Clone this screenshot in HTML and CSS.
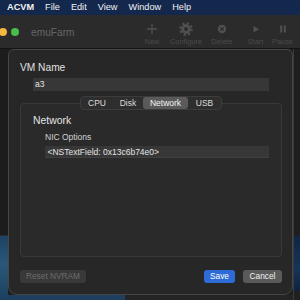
FILE: index.html
```html
<!DOCTYPE html>
<html>
<head>
<meta charset="utf-8">
<link rel="stylesheet" href="styles.css">
</head>
<body>
<div class="screen">
  <div class="menubar">
    <span class="menu app">ACVM</span>
    <span class="menu">File</span>
    <span class="menu">Edit</span>
    <span class="menu">View</span>
    <span class="menu">Window</span>
    <span class="menu">Help</span>
  </div>
  <div class="titlebar">
    <div class="lights"><span class="light yellow"></span><span class="light green"></span></div>
    <div class="title">emuFarm</div>
    <div class="toolbar">
      <div class="tool t-new">
        <svg class="icon" width="14" height="14" viewBox="0 0 14 14"><path d="M7 2V12M2 7H12" stroke="#505050" stroke-width="1.3" fill="none"/></svg>
        <span class="tool-label">New</span>
      </div>
      <div class="tool t-conf">
        <svg class="icon" width="14" height="14" viewBox="0 0 14 14"><circle cx="7" cy="7" r="5.6" fill="none" stroke="#505050" stroke-width="2.4" stroke-dasharray="2.2 2.2"/><circle cx="7" cy="7" r="4.7" fill="#505050"/><circle cx="7" cy="7" r="1.9" fill="#2b2b2b"/></svg>
        <span class="tool-label">Configure</span>
      </div>
      <div class="tool t-del">
        <svg class="icon" width="14" height="14" viewBox="0 0 14 14"><circle cx="7" cy="7" r="4.2" fill="#505050"/><path d="M5.3 5.3L8.7 8.7M8.7 5.3L5.3 8.7" stroke="#2b2b2b" stroke-width="1.1"/></svg>
        <span class="tool-label">Delete</span>
      </div>
      <div class="tool t-start">
        <svg class="icon" width="14" height="14" viewBox="0 0 14 14"><path d="M4.5 4L10 7.2L4.5 10.4Z" fill="#505050"/></svg>
        <span class="tool-label">Start</span>
      </div>
      <div class="tool t-pause">
        <svg class="icon" width="14" height="14" viewBox="0 0 14 14"><rect x="4.2" y="3.5" width="2" height="7" fill="#505050"/><rect x="7.8" y="3.5" width="2" height="7" fill="#505050"/></svg>
        <span class="tool-label">Pause</span>
      </div>
    </div>
  </div>
  <div class="stage">
    <div class="gutter gutter-left"></div>
    <div class="center">
      <div class="sheet">
        <div class="vm-label">VM Name</div>
        <div class="field field-name">a3</div>
        <div class="tabview">
          <div class="tabs">
            <span class="tab tab-cpu">CPU</span>
            <span class="tab tab-disk">Disk</span>
            <span class="tab tab-net active">Network</span>
            <span class="tab tab-usb">USB</span>
          </div>
          <div class="box">
            <div class="section">Network</div>
            <div class="nic-label">NIC Options</div>
            <div class="field field-nic">&lt;NSTextField: 0x13c6b74e0&gt;</div>
          </div>
        </div>
        <div class="buttons">
          <span class="btn btn-reset">Reset NVRAM</span>
          <span class="btn btn-save">Save</span>
          <span class="btn btn-cancel">Cancel</span>
        </div>
      </div>
      <div class="under"></div>
    </div>
    <div class="gutter gutter-right"></div>
  </div>
</div>
</body>
</html>
```
FILE: styles.css
```css
html, body {
  margin: 0;
  padding: 0;
  background: #1e1e1e;
}
body {
  font-family: "Liberation Sans", Arial, sans-serif;
}
.screen {
  width: 300px;
  height: 300px;
  overflow: hidden;
  display: flex;
  flex-direction: column;
}
.menubar {
  height: 15px;
  background: #14274c;
  display: flex;
  align-items: center;
  gap: 11px;
  padding-left: 7px;
  font-size: 9.2px;
  line-height: 15px;
  color: #f2f2f2;
}
.menu.app {
  font-weight: 700;
}
.titlebar {
  height: 33px;
  background: #2b2b2b;
  border-bottom: 1px solid #141414;
  display: flex;
  align-items: center;
}
.lights {
  display: flex;
  gap: 4px;
  margin-left: -1px;
  margin-top: 1px;
}
.light {
  width: 8px;
  height: 8px;
  border-radius: 50%;
}
.light.yellow { background: #f3b83e; }
.light.green { background: #47c04a; }
.title {
  margin-left: 12px;
  margin-top: 1px;
  font-size: 10.2px;
  color: #666666;
}
.toolbar {
  margin-left: auto;
  padding-right: 5px;
  display: flex;
  align-self: flex-start;
  padding-top: 7px;
}
.tool {
  display: flex;
  flex-direction: column;
  align-items: center;
}
.icon {
  display: block;
}
.tool-label {
  margin-top: 1px;
  font-size: 7.4px;
  line-height: 9px;
  color: #4a4a4a;
}
.t-new { width: 34px; }
.t-conf { width: 34px; }
.t-del { width: 38px; }
.t-start { width: 29px; }
.t-pause { width: 25px; }

.stage {
  flex: 1;
  display: flex;
}
.gutter-left {
  width: 8px;
  background:
    linear-gradient(to bottom, #1c1c1c 0, #1c1c1c 186px, #2c2c2c 186px, #2c2c2c 187px, #1d4264 187px, #2a5878 215px, #1c3f60 251px);
}
.center {
  width: 285px;
  display: flex;
  flex-direction: column;
}
.gutter-right {
  width: 6px;
  border-left: 1px solid #3a3a3a;
  background:
    linear-gradient(to bottom, #1e1e1e 0, #1e1e1e 187px, #0f2644 187px, #163459 220px, #0e2340 242px, #202020 242px);
}
.under {
  height: 5px;
  background: linear-gradient(to right, #1e3f5f 0, #1e3f5f 117px, #242424 117px);
}
.sheet {
  height: 246px;
  box-sizing: border-box;
  border: 1px solid #464646;
  border-radius: 6px 6px 9px 9px;
  background: #272727;
  padding: 12px 10px 11px 11px;
  display: flex;
  flex-direction: column;
}
.vm-label {
  font-size: 10.2px;
  line-height: 12px;
  color: #e0e0e0;
}
.field {
  box-sizing: border-box;
  background: #373737;
  font-size: 8.5px;
  color: #e4e4e4;
  white-space: nowrap;
}
.field-name {
  margin: 4px 0 0 13px;
  width: 236px;
  height: 13px;
  line-height: 13px;
  padding-left: 2px;
}
.tabview {
  margin-top: 5px;
  display: flex;
  flex-direction: column;
  align-items: center;
}
.tabs {
  position: relative;
  z-index: 1;
  display: flex;
  height: 14px;
  box-sizing: border-box;
  border: 1px solid #3c3c3c;
  border-radius: 4px;
  background: #2e2e2e;
}
.tab {
  text-align: center;
  font-size: 8.5px;
  line-height: 12px;
  color: #dcdcdc;
}
.tab.active {
  background: #5a5a5a;
  border-radius: 3px;
  color: #f4f4f4;
}
.tab-cpu { width: 32px; }
.tab-disk { width: 30px; }
.tab-net { width: 45px; }
.tab-usb { width: 33px; }
.box {
  align-self: stretch;
  margin-top: -7px;
  height: 154px;
  box-sizing: border-box;
  border: 1px solid #393939;
  border-radius: 4px;
  background: #2a2a2a;
  padding: 11px 12px 0;
}
.section {
  font-size: 10.4px;
  line-height: 12px;
  color: #e4e4e4;
}
.nic-label {
  margin: 5px 0 0 12px;
  font-size: 8.5px;
  line-height: 10px;
  color: #d2d2d2;
}
.field-nic {
  margin: 4px 0 0 12px;
  width: 224px;
  height: 12px;
  line-height: 12px;
  padding-left: 2.5px;
  border-bottom: 1px solid #404040;
}
.buttons {
  margin-top: 13px;
  display: flex;
}
.btn {
  height: 13px;
  line-height: 13px;
  border-radius: 3px;
  font-size: 8.3px;
  text-align: center;
}
.btn-reset {
  width: 66px;
  background: #393939;
  color: #6c6c6c;
}
.btn-save {
  margin-left: auto;
  width: 31px;
  background: #2d6bd7;
  color: #ffffff;
}
.btn-cancel {
  margin-left: 8px;
  width: 39px;
  background: #5a5a5a;
  color: #f0f0f0;
}
```
